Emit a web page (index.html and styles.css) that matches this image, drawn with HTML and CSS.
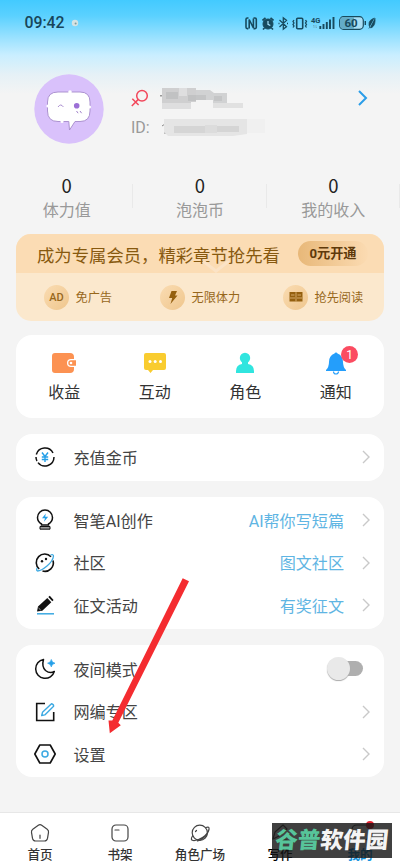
FILE: index.html
```html
<!DOCTYPE html>
<html lang="zh-CN">
<head>
<meta charset="utf-8">
<meta name="viewport" content="width=device-width">
<title>我的</title>
<link rel="stylesheet" href="styles.css">
</head>
<body>
<div class="screen">
  <header class="status">
    <span class="time">09:42</span>
    <svg class="dot" width="8" height="8" viewBox="0 0 8 8"><circle cx="4" cy="4" r="3.2" fill="#d5e3e4"/><circle cx="4.6" cy="4.4" r="1" fill="#7f9a9c"/></svg>
    <svg class="sys" width="132" height="18" viewBox="245 13 132 18" fill="none" stroke="#174a5e">
      <path d="M248.500 17h-1.200q-1.300 0-1.300 1.300v8q0 1.300 1.300 1.300h1M253.500 17h1.500q1.300 0 1.300 1.300v8q0 1.300-1.300 1.300h-1.500M249.200 27.500v-9l4.200 8.500v-9.500" stroke-width="1.600"/>
      <circle cx="268" cy="23" r="5" fill="#174a5e"/><path d="M262.500 19.500l3-2.700M273.500 19.500l-3-2.700M264.500 27l-1.500 1.500M271.500 27l1.500 1.500" stroke-width="1.700"/><path d="M268 20v3.300l2.300 1.300" stroke="#a5e3fd" stroke-width="1.200"/>
      <path d="M279.500 19l7 6.600-3.200 2.600V16.800l3.200 2.600-7 6.500M278.500 22.500h1M287 22.500h1" stroke-width="1.300"/>
      <rect x="296.700" y="17.300" width="6" height="10.500" rx="1" stroke-width="1.600"/><path d="M294 19l-1 1.500 1 1.500-1 1.500 1 1.500-1 1.500M305.500 19l1 1.500-1 1.500 1 1.500-1 1.500 1 1.500" stroke-width="1.300"/>
      <path d="M320.300 25v3M323.500 23v5M326.800 21v7M330 18.500v9.500M333.500 16v12" stroke-width="1.900"/>
      <path d="M314 27v-3l-1 1M316 24v3l1-1" stroke="#6da6ba" stroke-width=".7"/>
      <rect x="339.700" y="15.700" width="23.600" height="12.600" rx="3.800" stroke-width="1.200" fill="#a9dff5"/><path d="M344 16h10v12h-10q-4 0-4-4v-4q0-4 4-4z" fill="#63acc8" stroke="none"/><path d="M365.300 20v4" stroke-width="1.400"/>
      <path d="M374.500 17q-6 2-5.500 6.500 0 1.500.8 2.500l-1 1.500M375 17q.7 7-3 9.400-1 .6-2 .2" fill="#174a5e" stroke-width=".7"/>
      <text class="net" x="311" y="21.500">4G</text><text class="batt" x="344.500" y="26.200">60</text>
    </svg>
  </header>

  <section class="profile">
    <svg class="avatar" width="70" height="70" viewBox="0 0 70 70">
      <circle cx="35" cy="35" r="34.700" fill="#d9c1fb"/>
      <path d="M24 18h22q10 0 10 10v9q0 10.500-10 10.500h-5L35.500 56l-.7-8.500H24q-10.500 0-10.500-10.500v-9q0-10 10.500-10z" fill="#fff" stroke="#a58acb" stroke-width=".9"/>
      <path d="M24 33q2.700-4 5.400 0" fill="none" stroke="#a182c9" stroke-width=".9"/><circle cx="42.700" cy="31.800" r="2.800" fill="#9c70d6"/>
      <path d="M42.500 37l1.600 2.200M46 37l1.600 2.200" stroke="#a182c9"/>
      <g fill="#fff"><circle cx="36" cy="18" r="1.800"/><circle cx="14" cy="32" r="1.600"/><circle cx="55.500" cy="33" r="1.600"/><circle cx="28" cy="47.500" r="1.500"/></g>
    </svg>
    <div class="who">
      <div class="line">
        <svg width="18" height="20" viewBox="131 88 18 20" fill="none" stroke="#f2475b" stroke-width="1.500"><circle cx="142" cy="95.700" r="5.300"/><path d="M138.300 99.400l-6.500 6.600M132.300 98.800l6.300 6.200"/></svg>
        <svg width="100" height="22" viewBox="156 87 100 22"><path d="M160 95h2v1.500h-2z" fill="#999"/><path fill="#cfcfd0" d="M162 88h34v14h-5v7h-29z"/><path fill="#c1c2c3" d="M166 92h12v7h-12zM188 95h8v6h-8z"/><path fill="#dededf" d="M179 88h8v8h-8zM162 103h29v6h-29z"/><path fill="#d1d2d3" d="M196 90h14l4 3h13v10h-14v-3h-17z"/><path fill="#c4c5c6" d="M196 95h10v5h-10zM214 96h8v5h-8z"/><path fill="#e1e1e1" d="M213 103h30v5h-30z"/></svg>
      </div>
      <div class="line id"><span>ID:</span>
        <svg width="106" height="22" viewBox="162 115 106 22"><path d="M165 125l3-2v10" fill="none" stroke="#888"/><path fill="#e5e5e5" d="M167 118h83v15l-14 2h-65l-4-4z"/><path fill="#d5d5d5" d="M177 125h31v7h-31zM220 125h22v6h-22z"/><path fill="#dcdcdc" d="M208 124h12v8h-12z"/><path fill="#f0f0f0" d="M250 118h20v14h-20z"/></svg>
      </div>
    </div>
    <svg class="go" width="12" height="18" viewBox="0 0 12 18"><path d="M2 2l7 7-7 7" fill="none" stroke="#2b9de8" stroke-width="2"/></svg>
  </section>

  <section class="stats">
    <div><b>0</b><span>体力值</span></div>
    <div><b>0</b><span>泡泡币</span></div>
    <div><b>0</b><span>我的收入</span></div>
  </section>

  <section class="vip">
    <div class="vip-top">
      <span>成为专属会员，精彩章节抢先看</span><span class="open">0元开通</span>
      <svg class="notch" width="32" height="12" viewBox="0 0 32 12"><path d="M3 0l13 10L29 0" fill="none" stroke="#fbe3c6" stroke-width="3"/></svg>
    </div>
    <div class="perks">
      <div><i class="coin">AD</i>免广告</div>
      <div><i class="coin"><svg width="10" height="13" viewBox="0 0 10 13"><path d="M3.500 0H9L7 4.500h2.500L2.500 13l1.700-6H1z" fill="#95600f"/></svg></i>无限体力</div>
      <div><i class="coin"><svg width="14" height="12" viewBox="0 0 14 12"><path d="M.5 1h6l.5.500.5-.5h6v9.500h-6L7 11l-.5-.5h-6z" fill="#95600f"/><path d="M7 1.500V11M2 4h3.500M8.500 4H12M1 7h5M8 7h5" stroke="#e6bd80" stroke-width=".8"/></svg></i>抢先阅读</div>
    </div>
  </section>

  <section class="card quick">
    <div><svg width="26" height="24" viewBox="0 0 26 24"><path d="M4 2h15q4 0 4 4v12q0 4-4 4H4q-3 0-3-3V5q0-3 3-3z" fill="#fc9252"/><path d="M26 8h-6q-4 0-4 4t4 4h6z" fill="#fff"/><path d="M25 9.200h-5q-2.700 0-2.700 2.800t2.700 2.800h5z" fill="#fc9252"/><circle cx="20" cy="12" r="1.300" fill="#fff"/></svg>收益</div>
    <div><svg width="26" height="24" viewBox="0 0 26 24"><path d="M4 2h18q2 0 2 2v13q0 2-2 2H11l-2.500 3L6 19H4q-2 0-2-2V4q0-2 2-2z" fill="#f9cc2f"/><g fill="#fff"><circle cx="8" cy="10.500" r="1.500"/><circle cx="13.200" cy="10.500" r="1.500"/><circle cx="18.500" cy="10.500" r="1.500"/></g></svg>互动</div>
    <div><svg width="26" height="24" viewBox="0 0 26 24" fill="#31e5df"><circle cx="13" cy="7" r="5.200"/><path d="M10 10h6v3q6 1 6 7v2H4v-2q0-6 6-7z"/></svg>角色</div>
    <div class="bell"><svg width="26" height="24" viewBox="0 0 26 24"><path d="M11.500 2.500a1.600 1.600 0 0 1 3 0Q20 4.500 20 11q0 5 3 8v1H3v-1q3-3 3-8 0-6.500 5.500-8.500z" fill="#249efb"/><path d="M10.500 20.500a2.500 2.500 0 0 0 5 0" fill="#fff" stroke="#249efb" stroke-width="1.200"/></svg>通知<span class="badge">1</span></div>
  </section>

  <section class="card single">
    <div class="row"><svg class="ico" viewBox="0 0 24 24"><path d="M3.300 9.500A9 9 0 0 1 20 8M21 12A9 9 0 0 1 5 17.600M3 12q0 2.500 1 4" fill="none" stroke="#111" stroke-width="1.500"/><path d="M9 7.500l3 4 3-4M8.800 12h6.400M8.800 14.500h6.400M12 11.500V17" fill="none" stroke="#249fe8" stroke-width="1.400"/></svg><span>充值金币</span><svg class="chev" viewBox="0 0 8 14"><path d="M1 1l6 6-6 6"/></svg></div>
  </section>

  <section class="card group first">
    <div class="row"><svg class="ico" viewBox="0 0 24 24"><path d="M8.500 17v-1Q4.500 13.500 4.500 9.500a7.500 7.500 0 0 1 15 0q0 4-4 6.500v1z" fill="none" stroke="#111" stroke-width="1.500"/><path d="M7 18.500h10v2.700H7z" fill="#999" stroke="#111"/><path d="M12.800 5.500L9 10.200h3l-1 3.600 4.200-5h-3z" fill="#249fe8"/></svg><span>智笔AI创作</span><em>AI帮你写短篇</em><svg class="chev" viewBox="0 0 8 14"><path d="M1 1l6 6-6 6"/></svg></div>
    <div class="row"><svg class="ico" viewBox="0 0 24 24" fill="none"><path d="M6.200 18A8.500 8.500 0 1 1 18 5.800M20 9.500A8.500 8.500 0 0 1 9.500 20" stroke="#111" stroke-width="1.600"/><path d="M17.500 4q3-1 3 1-.5 5-6.500 10T4.500 20q-1.500-.5-.3-3" stroke="#3ca9e2" stroke-width="1.300"/><circle cx="9" cy="10.200" r="1.200" fill="#111"/><circle cx="13" cy="8" r="1.200" fill="#111"/></svg><span>社区</span><em>图文社区</em><svg class="chev" viewBox="0 0 8 14"><path d="M1 1l6 6-6 6"/></svg></div>
    <div class="row"><svg class="ico" viewBox="0 0 24 24"><path d="M4 18.500l1-5L14.300 5l4 4.300-9 8.400zM15.300 4l1.500-1.300 3.800 4.200L19.300 8.200z" fill="#111"/><path d="M5.500 15l2.200 2" stroke="#fff" stroke-width=".6"/><path d="M4 20.800h17" stroke="#3ca9e2" stroke-width="1.500"/></svg><span>征文活动</span><em>有奖征文</em><svg class="chev" viewBox="0 0 8 14"><path d="M1 1l6 6-6 6"/></svg></div>
  </section>

  <section class="card group second">
    <div class="row"><svg class="ico" viewBox="0 0 24 24"><path d="M10.500 2.500A9.500 9.500 0 1 0 21.300 14.500Q17 17 12.500 13.500 8.500 9.500 10.500 2.500z" fill="none" stroke="#111" stroke-width="1.500" stroke-linejoin="round"/><path d="M18.300 2.500q.5 3.200 3.700 3.700-3.200.5-3.700 3.700-.5-3.200-3.700-3.700 3.200-.5 3.700-3.700z" fill="#249fe8" stroke="#249fe8" stroke-width=".7"/></svg><span>夜间模式</span><i class="toggle"></i></div>
    <div class="row"><svg class="ico" viewBox="0 0 24 24" fill="none"><path d="M12 3.500H3.700v17h17V12" stroke="#111" stroke-width="1.600"/><path d="M8.700 15.500l.8-3.200 9-8.600q2.300.5 2.100 2.500l-8.800 8.700z" stroke="#3ca9e2" stroke-width="1.400" stroke-linejoin="round"/></svg><span>网编专区</span><svg class="chev" viewBox="0 0 8 14"><path d="M1 1l6 6-6 6"/></svg></div>
    <div class="row"><svg class="ico" viewBox="0 0 24 24" fill="none"><path d="M6.800 3h10.400l5 9-5 9H6.800l-5-9z" stroke="#111" stroke-width="1.600" stroke-linejoin="round"/><circle cx="12" cy="12" r="3" stroke="#3ca9e2" stroke-width="1.500"/></svg><span>设置</span><svg class="chev" viewBox="0 0 8 14"><path d="M1 1l6 6-6 6"/></svg></div>
  </section>

  <nav class="tabs">
    <div><svg viewBox="0 0 20 20"><path d="M8.300 2.300q1.700-1.200 3.400 0l5.500 3.900q1.700 1.200 1.300 3.200l-1 6q-.5 2.600-3 2.600h-9q-2.500 0-3-2.600l-1-6q-.4-2 1.300-3.200z"/><path d="M10 12v3.300"/></svg>首页</div>
    <div><svg viewBox="0 0 20 20"><rect x="2" y="2" width="16" height="16" rx="4"/><path d="M5 7h4"/></svg>书架</div>
    <div><svg viewBox="0 0 20 20"><circle cx="9.800" cy="9.800" r="7.600"/><path d="M16 4.500q3.600-1.300 3 2-1 4.500-6.500 8T3 17.500Q0 17 2.500 13M7.500 18q6-1.500 10-7.500M5.500 8.500l1-1"/></svg>角色广场</div>
    <div class="dark"><svg viewBox="0 0 20 20"><path d="M3 16l2-7 8-7 4 4-8 7zM8 17h9"/></svg>写作</div>
    <div class="active"><svg viewBox="0 0 20 20"><path d="M7 2h8q4 0 4 5v5q0 5-5 5H6q-4 0-4-5V7q0-5 5-5z"/></svg>我的<span class="red"></span></div>
  </nav>

  <div class="mark"><p><span>谷普</span>软件园</p></div>
  <svg class="arrow" width="86" height="160" viewBox="105 576 86 160"><path d="M182.700 578.200L189 581.300 118.300 722.800 120.800 725.300 109.800 733.300 108.500 720.500 112.300 720.500z" fill="#f42c30"/></svg>
</div>
</body>
</html>
```

FILE: styles.css
```css
* { box-sizing: border-box; }
body { margin: 0; background: #f4f4f4; font-family: Roboto, "Noto Sans CJK SC", sans-serif; color: #333; }
svg { display: block; flex: none; }
i, em { font-style: normal; }
.screen {
  position: relative; display: flex; flex-direction: column; width: 400px; height: 866px; overflow: hidden;
  background: linear-gradient(#43caff 0, #5bd1ff 16px, #98e1ff 37px, #c9eeff 55px, #e6f1f6 75px, #f4f4f4 94px);
}
.status { display: flex; align-items: center; height: 44px; padding: 1px 23px 0 24.500px; }
.time { width: 46.500px; font: 500 15.800px/20px Roboto, sans-serif; color: #17455a; }
.sys { margin-left: auto; }
.sys text { fill: #174a5e; stroke: none; font-family: Roboto, sans-serif; font-weight: 700; }
.net { font-size: 7.500px; }
.batt { font-size: 11.500px; }
.profile { display: flex; height: 129px; padding: 30px 31px 0 34px; }
.who { display: flex; flex-direction: column; gap: 7px; margin: 13px 0 0 27px; }
.line { display: flex; align-items: center; gap: 7px; height: 22px; }
.id { gap: 9px; font-size: 16px; color: #999; }
.go { margin: 15px 0 0 auto; }
.stats { display: grid; grid-template-columns: repeat(3, 1fr); height: 61px; }
.stats div { display: flex; flex-direction: column; align-items: center; background: linear-gradient(#e9e9e9, #e9e9e9) right 11px / 1px 24px no-repeat; }
.stats b { height: 26px; font: 400 18.500px/25px "Noto Sans CJK SC", sans-serif; color: #222; }
.stats span { font-size: 16px; line-height: 24px; color: #999; }
.vip { height: 87px; margin: 0 16px; border-radius: 15px; background: #fbe8cd; color: #87590f; overflow: hidden; }
.vip-top { position: relative; display: flex; align-items: center; justify-content: space-between; height: 39px; padding: 2px 16px 0 21px; background: #fbdcb4; font-size: 17.350px; white-space: nowrap; }
.open { width: 70px; height: 25px; margin-top: -3px; border-radius: 13px; background: linear-gradient(90deg, #e8b879, #fbdbb2); font-size: 13.200px; line-height: 25px; font-weight: 700; text-align: center; color: #5e390a; }
.notch { position: absolute; left: 184px; bottom: 0; }
.perks { display: grid; grid-template-columns: 116px 123px auto; height: 48px; padding-left: 28px; align-items: center; font-size: 12.200px; color: #97671b; }
.perks div { display: flex; align-items: center; gap: 6.500px; white-space: nowrap; }
.coin { display: flex; align-items: center; justify-content: center; width: 25px; height: 25px; border-radius: 50%; background: linear-gradient(135deg, #fadcb2, #efc68d); font-size: 11px; font-weight: 500; }
.card { margin: 0 16px; border-radius: 16px; background: #fff; }
.quick { display: grid; grid-template-columns: repeat(4, 90.500px); height: 83px; margin-top: 14px; padding: 16px 3px 0; font-size: 16px; line-height: 24px; }
.quick div { position: relative; display: flex; flex-direction: column; align-items: center; gap: 6px; }
.quick .badge { position: absolute; left: 50.500px; top: -5px; width: 17px; height: 17px; border-radius: 50%; background: #fb4c61; color: #fff; font-size: 12px; line-height: 18px; text-align: center; }
.single { height: 47px; margin-top: 16px; padding-top: 2px; }
.group { display: grid; grid-template-rows: repeat(3, 42.600px); height: 132px; margin-top: 16px; padding-top: 2px; }
.second { padding-top: 3px; }
.row { display: flex; align-items: center; height: 42.600px; padding: 0 14px 0 17px; font-size: 16.100px; color: #444; }
.ico { width: 24px; height: 24px; margin-right: 16.500px; }
.row span, .row em { margin-top: -1px; }
.row em { margin-left: auto; color: #5fb5e3; }
.chev { width: 8px; height: 14px; margin-left: auto; fill: none; stroke: #c9c9c9; stroke-width: 1.400; }
.row em + .chev { margin-left: 18px; }
.toggle { display: flex; align-items: center; width: 33px; height: 15px; margin: -2px 7px 0 auto; border-radius: 8px; background: #afafaf; }
.toggle::before { content: ""; flex: none; width: 23px; height: 23px; margin-left: -3px; border-radius: 50%; background: #e9e9e9; box-shadow: 0 1px 1px #aaa; }
.tabs { display: grid; grid-template-columns: repeat(5, 1fr); height: 54px; margin-top: auto; background: #fff; border-top: 1px solid #e7e7e7; }
.tabs div { position: relative; display: flex; flex-direction: column; align-items: center; padding-top: 10px; gap: 3px; font-size: 12.600px; line-height: 18px; font-weight: 500; color: #333; }
.tabs svg { width: 20px; height: 20px; fill: none; stroke: #444; stroke-width: 1.200; stroke-linecap: round; stroke-linejoin: round; }
.tabs .dark { color: #000; }
.tabs .active { color: #1592dd; font-weight: 700; }
.tabs .red { position: absolute; left: 46px; top: 8px; width: 8px; height: 8px; border-radius: 50%; background: #e62431; }
.mark { position: absolute; left: 272px; top: 823px; width: 120px; height: 35px; background: rgba(22, 22, 22, .82); }
.mark p { margin: 0; color: #f4f4f4; font: 900 22.600px/31px "Noto Sans CJK SC", sans-serif; text-align: center; white-space: nowrap; transform: skewX(-6deg); }
.mark span { color: #57c49a; }
.arrow { position: absolute; left: 105px; top: 576px; }
```
